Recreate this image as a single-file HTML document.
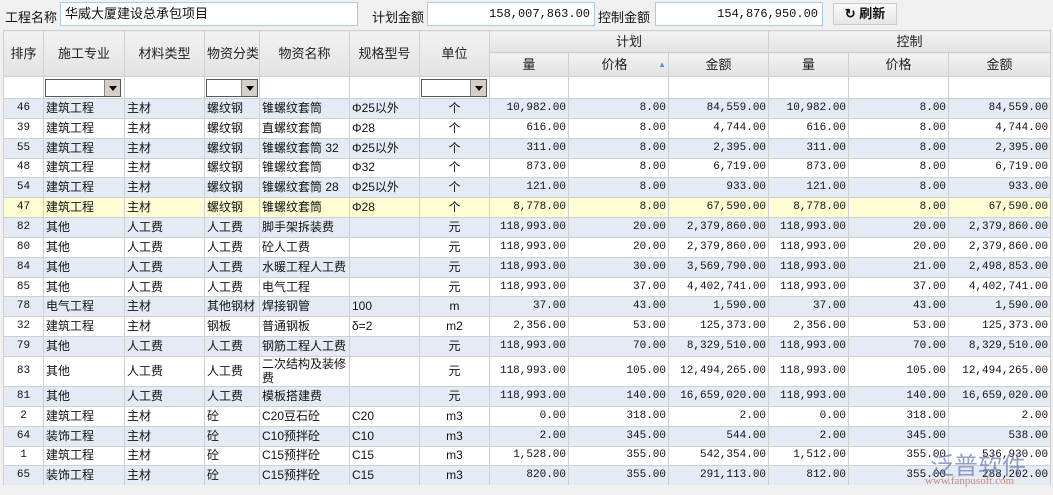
<!DOCTYPE html>
<html><head><meta charset="utf-8"><style>
*{margin:0;padding:0;box-sizing:border-box}
body{width:1053px;height:495px;overflow:hidden;background:#f0f0f0;font-family:"Liberation Sans","Noto Sans CJK SC",sans-serif;font-size:12px;color:#111;position:relative}
.lbl{position:absolute;top:7px;font-size:13px}
.inp{position:absolute;top:2px;height:24px;background:#fff;border:1px solid #a9c8ea;font-size:13px;line-height:22px;padding:0 4px}
.num{font-family:"Liberation Mono","DejaVu Sans Mono",monospace;font-size:12px}
.btn{position:absolute;left:833px;top:3px;width:64px;height:22px;border:1px solid #ccc;background:linear-gradient(#fafafa,#e6e6e6);font-size:13px;font-weight:bold;line-height:20px;text-align:center}
table{position:absolute;left:3px;top:30px;border-collapse:collapse;table-layout:fixed;width:1047px;background:#fff}
td,th{border:1px solid #cfcfcf;white-space:nowrap;overflow:hidden;padding:0 2px;height:19.85px;line-height:17px}
th{background:linear-gradient(#f2f2f2,#e2e2e2);font-weight:normal;font-size:13px;color:#222}
tr.f td{background:#fff;height:22px}
tr.b td{background:#e4ebf5}
tr.y td{background:#fefcd2}
td.r{text-align:right;font-family:"Liberation Mono","DejaVu Sans Mono",monospace;font-size:11px}
td.c{text-align:center}
td.n{text-align:center;font-family:"Liberation Mono",monospace;font-size:11px}
.sel{display:inline-block;width:76px;height:18px;border:1px solid #555;background:#fff;position:relative;vertical-align:middle}
.sel i{position:absolute;right:0;top:0;width:16px;height:16px;background:#d4d0c8;border-left:1px solid #888}
.sel i:after{content:"";position:absolute;left:4px;top:6px;border:4px solid transparent;border-top:5px solid #000}
.bot{position:absolute;left:0;top:485px;width:1053px;height:10px;background:#f0f0f0}
.wm{position:absolute;left:930px;top:446px;color:#6a7fb8;font-size:24px;opacity:.75}
.wm2{position:absolute;left:925px;top:475px;color:#c06040;font-size:11px;font-family:"Liberation Serif",serif;opacity:.7}
</style></head><body>
<div class="lbl" style="left:5px">工程名称</div>
<div class="inp" style="left:60px;width:298px;padding-left:4px">华威大厦建设总承包项目</div>
<div class="lbl" style="left:372px">计划金额</div>
<div class="inp num" style="left:427px;width:168px;text-align:right">158,007,863.00</div>
<div class="lbl" style="left:598px">控制金额</div>
<div class="inp num" style="left:655px;width:168px;text-align:right">154,876,950.00</div>
<div class="btn">↻ 刷新</div>
<table>
<colgroup><col style="width:40px"><col style="width:81px"><col style="width:80px"><col style="width:55px"><col style="width:90px"><col style="width:70px"><col style="width:70px"><col style="width:79px"><col style="width:100px"><col style="width:100px"><col style="width:80px"><col style="width:100px"><col style="width:102px"></colgroup>
<tr><th rowspan="2" style="height:46px">排序</th><th rowspan="2">施工专业</th><th rowspan="2">材料类型</th><th rowspan="2">物资分类</th><th rowspan="2">物资名称</th><th rowspan="2">规格型号</th><th rowspan="2">单位</th><th colspan="3" style="height:22px">计划</th><th colspan="3">控制</th></tr>
<tr><th style="height:24px">量</th><th>价格 <span style="color:#5b8fd0;font-size:8px;float:right">▲</span></th><th>金额</th><th>量</th><th>价格</th><th>金额</th></tr>
<tr class="f"><td></td><td style="padding:0 1px"><span class="sel"><i></i></span></td><td></td><td style="padding:0 1px"><span class="sel" style="width:52px"><i></i></span></td><td></td><td></td><td style="padding:0 1px"><span class="sel" style="width:66px"><i></i></span></td><td></td><td></td><td></td><td></td><td></td><td></td></tr>
<tr class="b"><td class="n">46</td><td>建筑工程</td><td>主材</td><td>螺纹钢</td><td>锥螺纹套筒</td><td>Φ25以外</td><td class="c">个</td><td class="r">10,982.00</td><td class="r">8.00</td><td class="r">84,559.00</td><td class="r">10,982.00</td><td class="r">8.00</td><td class="r">84,559.00</td></tr>
<tr><td class="n">39</td><td>建筑工程</td><td>主材</td><td>螺纹钢</td><td>直螺纹套筒</td><td>Φ28</td><td class="c">个</td><td class="r">616.00</td><td class="r">8.00</td><td class="r">4,744.00</td><td class="r">616.00</td><td class="r">8.00</td><td class="r">4,744.00</td></tr>
<tr class="b"><td class="n">55</td><td>建筑工程</td><td>主材</td><td>螺纹钢</td><td>锥螺纹套筒 32</td><td>Φ25以外</td><td class="c">个</td><td class="r">311.00</td><td class="r">8.00</td><td class="r">2,395.00</td><td class="r">311.00</td><td class="r">8.00</td><td class="r">2,395.00</td></tr>
<tr><td class="n">48</td><td>建筑工程</td><td>主材</td><td>螺纹钢</td><td>锥螺纹套筒</td><td>Φ32</td><td class="c">个</td><td class="r">873.00</td><td class="r">8.00</td><td class="r">6,719.00</td><td class="r">873.00</td><td class="r">8.00</td><td class="r">6,719.00</td></tr>
<tr class="b"><td class="n">54</td><td>建筑工程</td><td>主材</td><td>螺纹钢</td><td>锥螺纹套筒 28</td><td>Φ25以外</td><td class="c">个</td><td class="r">121.00</td><td class="r">8.00</td><td class="r">933.00</td><td class="r">121.00</td><td class="r">8.00</td><td class="r">933.00</td></tr>
<tr class="y"><td class="n">47</td><td>建筑工程</td><td>主材</td><td>螺纹钢</td><td>锥螺纹套筒</td><td>Φ28</td><td class="c">个</td><td class="r">8,778.00</td><td class="r">8.00</td><td class="r">67,590.00</td><td class="r">8,778.00</td><td class="r">8.00</td><td class="r">67,590.00</td></tr>
<tr class="b"><td class="n">82</td><td>其他</td><td>人工费</td><td>人工费</td><td>脚手架拆装费</td><td></td><td class="c">元</td><td class="r">118,993.00</td><td class="r">20.00</td><td class="r">2,379,860.00</td><td class="r">118,993.00</td><td class="r">20.00</td><td class="r">2,379,860.00</td></tr>
<tr><td class="n">80</td><td>其他</td><td>人工费</td><td>人工费</td><td>砼人工费</td><td></td><td class="c">元</td><td class="r">118,993.00</td><td class="r">20.00</td><td class="r">2,379,860.00</td><td class="r">118,993.00</td><td class="r">20.00</td><td class="r">2,379,860.00</td></tr>
<tr class="b"><td class="n">84</td><td>其他</td><td>人工费</td><td>人工费</td><td>水暖工程人工费</td><td></td><td class="c">元</td><td class="r">118,993.00</td><td class="r">30.00</td><td class="r">3,569,790.00</td><td class="r">118,993.00</td><td class="r">21.00</td><td class="r">2,498,853.00</td></tr>
<tr><td class="n">85</td><td>其他</td><td>人工费</td><td>人工费</td><td>电气工程</td><td></td><td class="c">元</td><td class="r">118,993.00</td><td class="r">37.00</td><td class="r">4,402,741.00</td><td class="r">118,993.00</td><td class="r">37.00</td><td class="r">4,402,741.00</td></tr>
<tr class="b"><td class="n">78</td><td>电气工程</td><td>主材</td><td>其他钢材</td><td>焊接钢管</td><td>100</td><td class="c">m</td><td class="r">37.00</td><td class="r">43.00</td><td class="r">1,590.00</td><td class="r">37.00</td><td class="r">43.00</td><td class="r">1,590.00</td></tr>
<tr><td class="n">32</td><td>建筑工程</td><td>主材</td><td>钢板</td><td>普通钢板</td><td>δ=2</td><td class="c">m2</td><td class="r">2,356.00</td><td class="r">53.00</td><td class="r">125,373.00</td><td class="r">2,356.00</td><td class="r">53.00</td><td class="r">125,373.00</td></tr>
<tr class="b"><td class="n">79</td><td>其他</td><td>人工费</td><td>人工费</td><td>钢筋工程人工费</td><td></td><td class="c">元</td><td class="r">118,993.00</td><td class="r">70.00</td><td class="r">8,329,510.00</td><td class="r">118,993.00</td><td class="r">70.00</td><td class="r">8,329,510.00</td></tr>
<tr><td class="n" style="height:30px">83</td><td>其他</td><td>人工费</td><td>人工费</td><td style="white-space:normal;line-height:14px">二次结构及装修费</td><td></td><td class="c">元</td><td class="r">118,993.00</td><td class="r">105.00</td><td class="r">12,494,265.00</td><td class="r">118,993.00</td><td class="r">105.00</td><td class="r">12,494,265.00</td></tr>
<tr class="b"><td class="n">81</td><td>其他</td><td>人工费</td><td>人工费</td><td>模板搭建费</td><td></td><td class="c">元</td><td class="r">118,993.00</td><td class="r">140.00</td><td class="r">16,659,020.00</td><td class="r">118,993.00</td><td class="r">140.00</td><td class="r">16,659,020.00</td></tr>
<tr><td class="n">2</td><td>建筑工程</td><td>主材</td><td>砼</td><td>C20豆石砼</td><td>C20</td><td class="c">m3</td><td class="r">0.00</td><td class="r">318.00</td><td class="r">2.00</td><td class="r">0.00</td><td class="r">318.00</td><td class="r">2.00</td></tr>
<tr class="b"><td class="n">64</td><td>装饰工程</td><td>主材</td><td>砼</td><td>C10预拌砼</td><td>C10</td><td class="c">m3</td><td class="r">2.00</td><td class="r">345.00</td><td class="r">544.00</td><td class="r">2.00</td><td class="r">345.00</td><td class="r">538.00</td></tr>
<tr><td class="n">1</td><td>建筑工程</td><td>主材</td><td>砼</td><td>C15预拌砼</td><td>C15</td><td class="c">m3</td><td class="r">1,528.00</td><td class="r">355.00</td><td class="r">542,354.00</td><td class="r">1,512.00</td><td class="r">355.00</td><td class="r">536,930.00</td></tr>
<tr class="b"><td class="n">65</td><td>装饰工程</td><td>主材</td><td>砼</td><td>C15预拌砼</td><td>C15</td><td class="c">m3</td><td class="r">820.00</td><td class="r">355.00</td><td class="r">291,113.00</td><td class="r">812.00</td><td class="r">355.00</td><td class="r">288,202.00</td></tr>
</table>
<div class="bot"></div>
<div class="wm">泛普软件</div>
<div class="wm2">www.fanpusoft.com</div>
</body></html>
